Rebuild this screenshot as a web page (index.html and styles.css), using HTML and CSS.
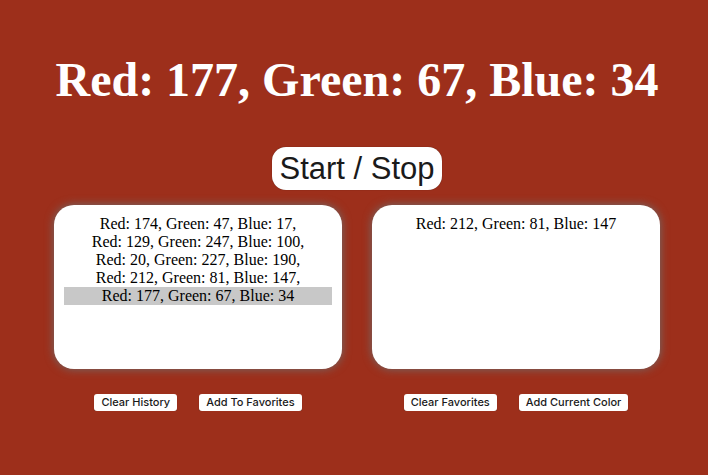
FILE: index.html
```html
<!DOCTYPE html>
<html lang="en">
<head>
<meta charset="utf-8">
<meta name="viewport" content="width=device-width, initial-scale=1">
<title>Random Colors</title>
<link rel="stylesheet" href="styles.css">
</head>
<body>
<main class="app">
  <h1 class="current">Red: 177, Green: 67, Blue: 34</h1>
  <button class="toggle" type="button">Start / Stop</button>
  <div class="columns">
    <section class="column">
      <ul class="panel">
        <li>Red: 174, Green: 47, Blue: 17,</li>
        <li>Red: 129, Green: 247, Blue: 100,</li>
        <li>Red: 20, Green: 227, Blue: 190,</li>
        <li>Red: 212, Green: 81, Blue: 147,</li>
        <li class="selected">Red: 177, Green: 67, Blue: 34</li>
      </ul>
      <div class="actions">
        <button class="action" type="button">Clear History</button>
        <button class="action" type="button">Add To Favorites</button>
      </div>
    </section>
    <section class="column">
      <ul class="panel">
        <li>Red: 212, Green: 81, Blue: 147</li>
      </ul>
      <div class="actions">
        <button class="action" type="button">Clear Favorites</button>
        <button class="action" type="button">Add Current Color</button>
      </div>
    </section>
  </div>
</main>
</body>
</html>
```
FILE: styles.css
```css
* {
  box-sizing: border-box;
}

body {
  margin: 0;
  background: #9d2f1b;
  color: #000;
  font: 16px/18px "Liberation Serif", "Times New Roman", serif;
  text-align: center;
}

.app {
  display: flex;
  flex-direction: column;
  align-items: center;
  padding: 50px 48px 0 54px;
}

.current {
  margin: 0 0 37px;
  color: #fff;
  font-size: 48px;
  line-height: 60px;
  white-space: nowrap;
}

button {
  border: 0;
  background: #fff;
  color: #1a1a1a;
  font-family: Inter, sans-serif;
  box-shadow: 0 0 1px rgba(0, 0, 0, 0.5);
}

.toggle {
  margin-bottom: 15px;
  padding: 0 7px;
  border-radius: 14px;
  font-family: "Liberation Sans", Arial, sans-serif;
  font-size: 31px;
  line-height: 43px;
}

.columns {
  display: grid;
  grid-template-columns: 1fr 1fr;
  gap: 30px;
  width: 100%;
}

.panel {
  min-height: 164px;
  margin: 0 0 25px;
  padding: 10px;
  border-radius: 20px;
  background: #fff;
  box-shadow: 0 0 10px #6e6e6e;
  list-style: none;
}

.selected {
  background: #c8c8c8;
}

.actions {
  display: flex;
  justify-content: center;
  gap: 22px;
}

.action {
  padding: 0 7px;
  border-radius: 3px;
  font-size: 11px;
  font-weight: 500;
  line-height: 17px;
  box-shadow: 0 1px 1px rgba(0, 0, 0, 0.3);
}
```
